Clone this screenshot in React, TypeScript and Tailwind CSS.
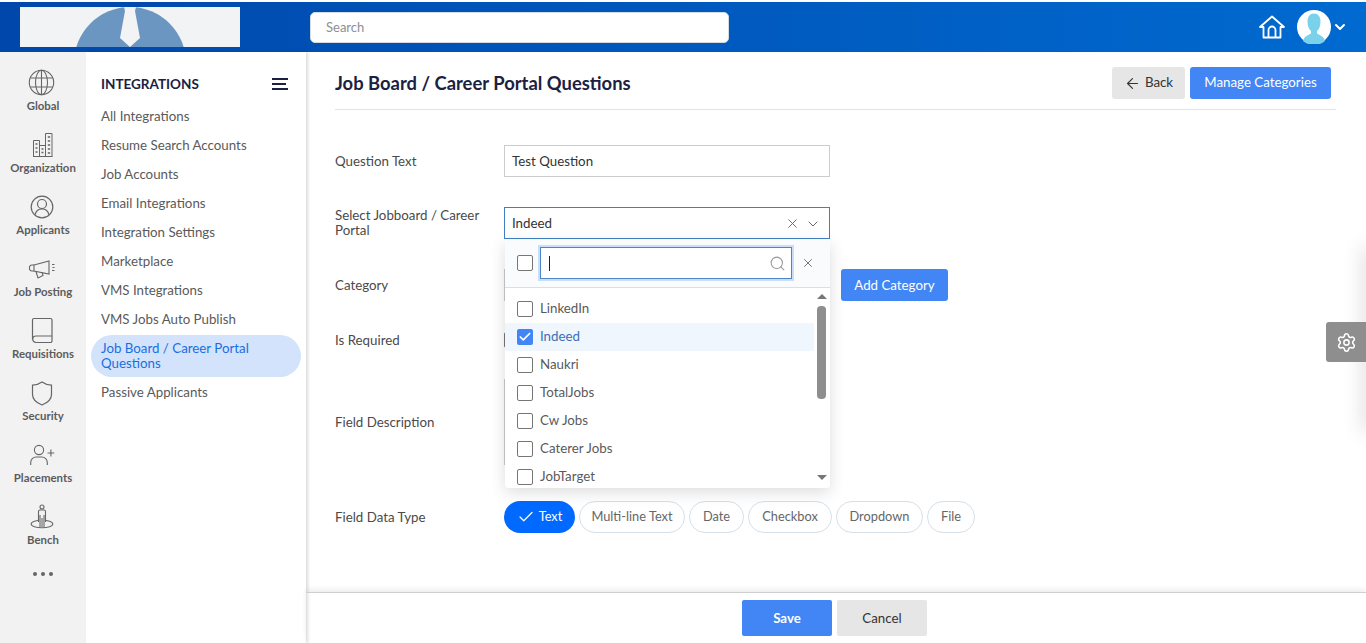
import { ReactNode } from 'react';
import { ArrowLeft, Check, ChevronDown, Search, Settings, X } from 'lucide-react';

const railIcon = 'w-[30px] h-[30px] text-[#666] fill-none stroke-current';

const railItems: { label: string; icon: ReactNode }[] = [
  {
    label: 'Global',
    icon: (
      <svg viewBox="0 0 30 30" className={railIcon} strokeWidth="1.1">
        <circle cx="13.5" cy="14.5" r="12.2" />
        <ellipse cx="13.5" cy="14.5" rx="6" ry="12.2" />
        <path d="M13.5 2.3v24.4M2.5 10h22M2.5 19h22" />
      </svg>
    ),
  },
  {
    label: 'Organization',
    icon: (
      <svg viewBox="0 0 30 30" className={railIcon} strokeWidth="1">
        <path d="M5.5 26.5V10.5h6v16M11.5 26.5V15.5h6v11M17.5 26.5V3.5H24v23M5 26.5h19.5" />
        <path d="M7.5 14h2M7.5 18h2M13.5 19h2M7.5 22h2M13.5 22.5h2M19.8 7h2.4M19.8 11h2.4M19.8 15h2.4M19.8 19h2.4M19.8 23h2.4" strokeWidth="1.4" />
      </svg>
    ),
  },
  {
    label: 'Applicants',
    icon: (
      <svg viewBox="0 0 30 30" className={railIcon} strokeWidth="1.2">
        <circle cx="14" cy="15" r="10.8" />
        <circle cx="14" cy="12" r="4.5" />
        <path d="M7 23c.8-4 3.5-6.2 7-6.2s6.200 2.200 7 6.200" />
      </svg>
    ),
  },
  {
    label: 'Job Posting',
    icon: (
      <svg viewBox="0 0 30 30" className={railIcon} strokeWidth="1.1">
        <path d="M6 11 21 7v13L6 17Z" />
        <path d="M6 11H4a2.5 2.5 0 0 0-2.500 3 2.500 2.500 0 0 0 2.500 3h2" />
        <path d="M8 17.500 10 24l5-2.500-.8-3" />
        <path d="M24 10.500h2.500M24.500 13.500h2M24 16.500h2.500" strokeWidth="1" />
      </svg>
    ),
  },
  {
    label: 'Requisitions',
    icon: (
      <svg viewBox="0 0 30 30" className={railIcon} strokeWidth="1.2">
        <path d="M4.500 23.500V4A1.500 1.500 0 0 1 6 2.500h16.500A1.500 1.500 0 0 1 24 4v16H8a3.250 3.250 0 0 0 0 6.500h14.500A1.500 1.500 0 0 0 24 25v-5" />
      </svg>
    ),
  },
  {
    label: 'Security',
    icon: (
      <svg viewBox="0 0 30 30" className={railIcon} strokeWidth="1.2">
        <path d="M14 4c2.800 2 5.800 3 9.500 3.200v9.300c0 4.500-3.200 8-9.500 10.500-6.300-2.500-9.500-6-9.500-10.500V7.200C8.200 7 11.200 6 14 4Z" />
      </svg>
    ),
  },
  {
    label: 'Placements',
    icon: (
      <svg viewBox="0 0 30 30" className={railIcon} strokeWidth="1.1">
        <circle cx="11" cy="10" r="4.6" />
        <path d="M2.700 25v-2.500a5.500 5.500 0 0 1 5.500-5.500h5.600a5.500 5.500 0 0 1 5.500 5.500V25" />
        <path d="M19.500 13h6.800M22.900 9.600v6.800" />
      </svg>
    ),
  },
  {
    label: 'Bench',
    icon: (
      <svg viewBox="0 0 30 30" className={railIcon} strokeWidth="1.1">
        <ellipse cx="14" cy="22" rx="10.8" ry="3.8" />
        <circle cx="14" cy="5" r="2" />
        <path d="M10.500 20V9.500A1.500 1.500 0 0 1 12 8h4a1.500 1.500 0 0 1 1.500 1.500V20M12 25V13M16 25V13M14 16v9" fill="#f2f2f2" />
      </svg>
    ),
  },
];

const menuItems = [
  'All Integrations',
  'Resume Search Accounts',
  'Job Accounts',
  'Email Integrations',
  'Integration Settings',
  'Marketplace',
  'VMS Integrations',
  'VMS Jobs Auto Publish',
];

const portals = ['LinkedIn', 'Indeed', 'Naukri', 'TotalJobs', 'Cw Jobs', 'Caterer Jobs', 'JobTarget'];

const fieldTypes = [
  { name: 'Multi-line Text', width: 'w-[106px]' },
  { name: 'Date', width: 'w-[55px]' },
  { name: 'Checkbox', width: 'w-[84px]' },
  { name: 'Dropdown', width: 'w-[87px]' },
  { name: 'File', width: 'w-[48px]' },
];

const Row = ({ label, children, className }: { label: string; children: ReactNode; className: string }) => (
  <div className={`flex items-center ${className}`}>
    <label className="w-[169px] pr-5 text-[13.3px] leading-[15px] text-[#4a4a4a]">{label}</label>
    {children}
  </div>
);

const Box = ({ checked }: { checked?: boolean }) =>
  checked ? (
    <span className="flex h-4 w-4 shrink-0 items-center justify-center rounded-[2px] bg-[#4285f4]">
      <Check className="h-3.5 w-3.5 text-white" strokeWidth={3} />
    </span>
  ) : (
    <span className="h-4 w-4 shrink-0 rounded-[2px] border border-[#767676] bg-white" />
  );

const Dropdown = () => (
  <div className="absolute left-[1px] top-[33px] z-10 h-[248px] w-[325px] overflow-hidden rounded-b-[3px] bg-white shadow-[0_4px_16px_rgba(0,0,0,0.14)]">
    <div className="flex h-[48px] items-center border-b border-[#dedede] bg-[#fafbfc] pb-[1px] pl-[12px]">
      <Box />
      <div className="ml-[7px] flex h-[32px] w-[252px] items-center justify-between border border-[#4a86c8] bg-white pl-2 pr-[5px] shadow-[0_0_0_2px_rgba(66,133,244,0.25)]">
        <span className="h-[15px] w-px bg-[#222]" />
        <Search className="h-[17px] w-[17px] text-[#999]" strokeWidth={1.5} />
      </div>
      <X className="ml-[9px] h-[14px] w-[14px] text-[#666]" strokeWidth={1.5} />
    </div>
    <div className="relative">
      <div className="pt-[7px]">
        {portals.map((name) => (
          <div
            key={name}
            className={`flex h-[28px] w-[309px] items-center gap-[7px] pl-[12px] text-[13.3px] ${
              name === 'Indeed' ? 'bg-[#eff6fd] text-[#3b6fb5]' : 'text-[#5a5a5a]'
            }`}
          >
            <Box checked={name === 'Indeed'} />
            {name}
          </div>
        ))}
      </div>
      <div className="absolute inset-y-0 right-[4px] flex w-[9px] flex-col items-center justify-between pb-[11px] pt-[6px]">
        <span className="h-0 w-0 border-x-[5px] border-b-[5px] border-x-transparent border-b-[#777]" />
        <span className="absolute top-[18px] h-[93px] w-[9px] rounded-[4px] bg-[#8e8e8e]" />
        <span className="h-0 w-0 border-x-[5px] border-t-[5px] border-x-transparent border-t-[#777]" />
      </div>
    </div>
  </div>
);

export default function App() {
  return (
    <div className="flex h-screen flex-col overflow-hidden bg-white pt-[2px] font-['Lato',sans-serif]">
      <header className="flex h-[50px] shrink-0 items-center bg-gradient-to-r from-[#0047ab] to-[#006ad0] pl-5 pr-[18px]">
        <svg viewBox="0 0 220 40" className="h-[40px] w-[220px] bg-[#f1f3f4]">
          <circle cx="110" cy="56" r="56" fill="#6c96c2" />
          <path d="M104 0h12l-1 4 5 27-10 9-10-9 5-27Z" fill="#f1f3f4" />
        </svg>
        <div className="ml-[70px] flex h-[31px] w-[419px] items-center rounded-[5px] border border-[#d5dbe3] bg-white pl-[15px] pt-[1px] text-[13px] text-[#8a8f96]">
          Search
        </div>
        <svg viewBox="0 0 26 24" className="ml-auto h-[24px] w-[26px] fill-none stroke-white" strokeWidth="1.8" strokeLinejoin="round">
          <path d="M1 12 13 1.500 25 12h-3.500v10.500h-17V12Z" />
          <path d="M9.500 22.500V15a3.500 3.500 0 0 1 7 0v7.500" />
        </svg>
        <svg viewBox="0 0 34 34" className="ml-3 h-[34px] w-[34px]">
          <circle cx="17" cy="17" r="17" fill="#fff" />
          <path d="M6 31c1-5 6-6 8-7.500V21c-2-1.500-3.500-5-3.500-9.500C10.500 6.500 13 3.500 17 3.500s6.500 3 6.500 8c0 4.500-1.500 8-3.500 9.500v2.500c2 1.500 7 2.500 8 7.500a17 17 0 0 1-22 0Z" fill="#7ad2ea" />
        </svg>
        <ChevronDown className="ml-[1px] h-4 w-4 text-white" strokeWidth={3} />
      </header>

      <div className="flex min-h-0 flex-1">
        <nav className="flex w-[86px] shrink-0 flex-col items-center bg-[#f2f2f2] pt-[16px]">
          {railItems.map((item) => (
            <div key={item.label} className="flex h-[62px] flex-col items-center">
              {item.icon}
              <span className="mt-[1px] text-[11.4px] font-bold leading-[14px] text-[#5c5c5c]">{item.label}</span>
            </div>
          ))}
          <div className="mt-[8px] flex gap-[4px]">
            <span className="h-[4px] w-[4px] rounded-full bg-[#666]" />
            <span className="h-[4px] w-[4px] rounded-full bg-[#666]" />
            <span className="h-[4px] w-[4px] rounded-full bg-[#666]" />
          </div>
        </nav>

        <aside className="w-[220px] shrink-0 px-[5px] pt-[23px] shadow-[2px_0_3px_rgba(0,0,0,0.14)]">
          <div className="flex items-center justify-between pl-[10px] pr-[13px]">
            <span className="text-[13.5px] font-bold leading-[18px] text-[#1a2142]">INTEGRATIONS</span>
            <span className="flex w-4 flex-col gap-[3px]">
              <span className="h-[2px] w-4 bg-[#1a2142]" />
              <span className="h-[2px] w-[14px] bg-[#1a2142]" />
              <span className="h-[2px] w-4 bg-[#1a2142]" />
            </span>
          </div>
          <ul className="mt-[9px] text-[13.3px] text-[#5a5a5a]">
            {menuItems.map((item) => (
              <li key={item} className="flex h-[29px] items-center pl-[10px]">
                {item}
              </li>
            ))}
            <li className="my-[1px] flex h-[42px] items-center rounded-[21px] bg-[#d2e3fb] pl-[10px] leading-[15px] text-[#1a6fe0]">
              Job Board / Career Portal
              <br />
              Questions
            </li>
            <li className="flex h-[29px] items-center pl-[10px]">Passive Applicants</li>
          </ul>
        </aside>

        <main className="relative flex min-w-0 flex-1 flex-col">
          <div className="flex-1 pl-[29px] pr-[30px]">
            <div className="flex h-[58px] items-center justify-between border-b border-[#e3e3e3] pr-[5px] pt-[6px]">
              <h1 className="text-[18.4px] font-bold text-[#1a2142]">Job Board / Career Portal Questions</h1>
              <div className="mb-[2px] flex gap-[5px] text-[13.3px]">
                <button className="flex h-[32px] w-[73px] items-center justify-center gap-[4px] rounded-[3px] bg-[#e6e6e6] pt-[1px] text-[#333]">
                  <ArrowLeft className="h-[17px] w-[17px]" strokeWidth={1.6} />
                  Back
                </button>
                <button className="h-[32px] w-[141px] rounded-[3px] bg-[#4285f4] pt-[1px] text-white">Manage Categories</button>
              </div>
            </div>

            <Row label="Question Text" className="mt-[35px] h-[32px]">
              <div className="flex h-full w-[326px] items-center border border-[#ccc] pl-[7px] pt-[1px] text-[13.3px] text-[#333]">Test Question</div>
            </Row>

            <Row label="Select Jobboard / Career Portal" className="relative mt-[30px] h-[32px]">
              <div className="relative h-full w-[326px]">
                <div className="flex h-full items-center border border-[#3f80c4] pl-[7px] pr-[8px] pt-[1px] text-[13.3px] text-[#333]">
                  Indeed
                  <X className="ml-auto h-[15px] w-[15px] text-[#666]" strokeWidth={1.5} />
                  <ChevronDown className="ml-[5px] h-[16px] w-[16px] text-[#666]" strokeWidth={1.5} />
                </div>
                <Dropdown />
              </div>
            </Row>

            <Row label="Category" className="mt-[30px] h-[32px]">
              <div className="h-full w-[326px] border border-[#ccc]" />
              <button className="ml-[11px] h-full w-[107px] rounded-[3px] bg-[#4285f4] pt-[1px] text-[13.3px] text-white">Add Category</button>
            </Row>

            <Row label="Is Required" className="mt-[31px] h-[16px]">
              <span className="h-4 w-4 rounded-[2px] border border-[#767676]" />
            </Row>

            <Row label="Field Description" className="mt-[31px] h-[86px]">
              <div className="h-full w-[326px] border border-[#ccc]" />
            </Row>

            <Row label="Field Data Type" className="mt-[36px] h-[32px]">
              <div className="flex gap-[4px] text-[12.8px] text-[#666]">
                <span className="flex h-[32px] w-[71px] items-center justify-center gap-[4px] rounded-full bg-[#0069ff] text-white">
                  <Check className="h-[18px] w-[18px]" strokeWidth={1.7} />
                  Text
                </span>
                {fieldTypes.map((type) => (
                  <span key={type.name} className={`flex h-[32px] items-center justify-center rounded-full border border-[#d5e0e8] ${type.width}`}>
                    {type.name}
                  </span>
                ))}
              </div>
            </Row>
          </div>

          <footer className="flex h-[51px] shrink-0 justify-center gap-[5px] border-t border-[#cfcfcf] pr-[3px] pt-[7px] text-[13.3px] shadow-[0_-3px_5px_rgba(0,0,0,0.07)]">
            <button className="h-[36px] w-[90px] rounded-[2px] bg-[#4285f4] pt-[1px] font-bold text-white">Save</button>
            <button className="h-[36px] w-[90px] rounded-[2px] bg-[#e6e6e6] pt-[1px] text-[#333]">Cancel</button>
          </footer>

          <div className="absolute right-[-6px] top-[195px] h-[185px] w-[6px] shadow-[0_0_20px_rgba(0,0,0,0.3)]" />
          <div className="absolute right-0 top-[270px] flex h-[40px] w-[40px] items-center justify-center rounded-l-[3px] bg-[#8e8e8e]">
            <Settings className="h-[21px] w-[21px] text-white" strokeWidth={1.8} />
          </div>
        </main>
      </div>
    </div>
  );
}
